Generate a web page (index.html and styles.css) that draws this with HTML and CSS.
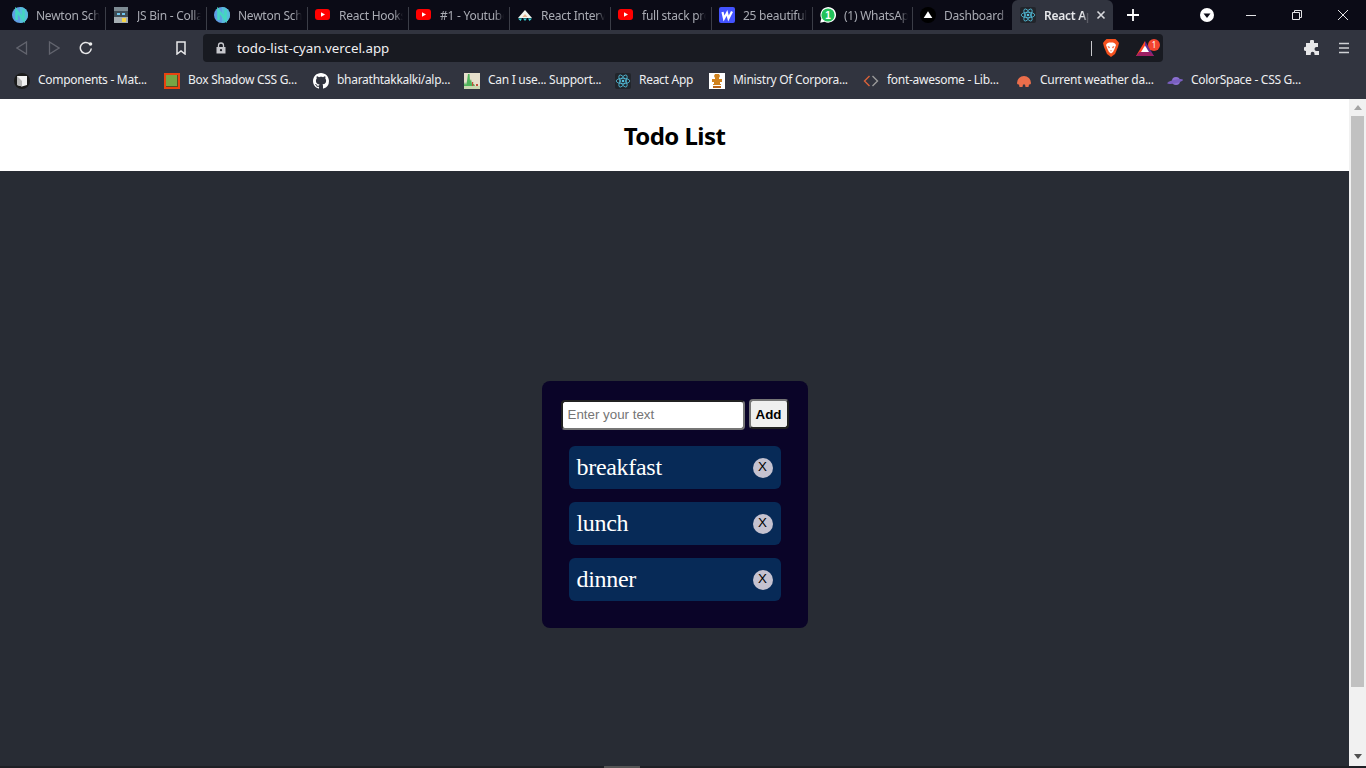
FILE: index.html
```html
<!DOCTYPE html>
<html lang="en">

<head>
    <meta charset="UTF-8">
    <meta name="viewport" content="width=device-width, initial-scale=1.0">
    <title>React App</title>
    <link rel="stylesheet" href="styles.css">
</head>

<body>
    <svg class="defs" aria-hidden="true">
        <symbol id="newton" viewBox="0 0 16 16">
            <circle cx="8" cy="8" r="8" fill="#5f9fe4" />
            <path d="M8 0a8 8 0 0 1 0 16Z" fill="#58bcdc" />
            <path d="M4.500 13V3.500L11.500 12.500V2.500" fill="none" stroke="#45d6c0" stroke-width="2.600" />
        </symbol>
        <symbol id="jsbin" viewBox="0 0 16 16">
            <rect x="1" width="14" height="4" fill="#7d8b93" />
            <rect x="1" y="4" width="14" height="6" fill="#3f4d56" />
            <rect x="1" y="10" width="14" height="6" fill="#a5aeb3" />
            <rect x="4" y="6" width="3" height="2" fill="#6fc6ee" />
            <rect x="9" y="6" width="3" height="2" fill="#6fc6ee" />
            <rect x="9" y="11" width="4" height="4" fill="#f5d547" />
        </symbol>
        <symbol id="youtube" viewBox="0 0 16 16">
            <rect y="2" width="15" height="11" rx="3" fill="#f00" />
            <path d="M6 5.200v4.600L10 7.500Z" fill="#fff" />
        </symbol>
        <symbol id="peak" viewBox="0 0 16 16">
            <path d="M8 3 15 11H1Z" fill="#f2f4ee" />
            <path d="M8 7 10.500 10H5.500Z" fill="#e8b48e" />
            <path d="M1 11.500h4l-1.500 2.500ZM6 11.500h4L8 14ZM11 11.500h4L12.500 14Z" fill="#36d4d8" />
        </symbol>
        <symbol id="webflow" viewBox="0 0 16 16">
            <rect width="16" height="16" rx="2" fill="#4353ff" />
            <path d="M3.500 5 5 11.500 8 6 9.500 11.500 13 4.500" fill="none" stroke="#fff" stroke-width="2.200" />
        </symbol>
        <symbol id="whatsapp" viewBox="0 0 16 16">
            <path d="M.2 15.800 1.300 11.500A7.800 7.800 0 1 1 4.600 14.800Z" fill="#fff" />
            <circle cx="8" cy="8" r="6.600" fill="#22c25a" />
            <text x="8" y="11.500" class="wa-count">1</text>
        </symbol>
        <symbol id="vercel" viewBox="0 0 16 16">
            <circle cx="8" cy="8" r="8" fill="#000" />
            <path d="M8 4.200 12.300 11H3.700Z" fill="#fff" />
        </symbol>
        <symbol id="react" viewBox="0 0 16 16">
            <rect width="16" height="16" rx="2" fill="#22252b" />
            <g fill="none" stroke="#53c1de" stroke-width=".8">
                <ellipse cx="8" cy="8" rx="6.800" ry="2.700" />
                <ellipse cx="8" cy="8" rx="6.800" ry="2.700" transform="rotate(60 8 8)" />
                <ellipse cx="8" cy="8" rx="6.800" ry="2.700" transform="rotate(120 8 8)" />
            </g>
            <circle cx="8" cy="8" r="1.300" fill="#53c1de" />
        </symbol>
        <symbol id="mui" viewBox="0 0 16 16">
            <circle cx="8" cy="8" r="8" fill="#1c1c1c" />
            <path d="M3 3h10V12L8 13.500 3 12Z" fill="#f2f2f2" />
            <path d="M3 3 8 8V13.500L3 12Z" fill="#b8b8b8" />
        </symbol>
        <symbol id="boxshadow" viewBox="0 0 16 16">
            <rect width="16" height="16" fill="#e8430f" />
            <rect x="2" y="2" width="12" height="12" fill="#76a544" />
            <path d="M2 13h12v1H2ZM13 2h1v12h-1Z" fill="#5c4a20" />
        </symbol>
        <symbol id="github" viewBox="0 0 16 16">
            <path fill="#fff" d="M8 0C3.580 0 0 3.580 0 8c0 3.540 2.290 6.530 5.470 7.590.4.070.55-.17.55-.38 0-.19-.01-.82-.01-1.490-2.010.37-2.530-.49-2.690-.94-.09-.23-.48-.94-.82-1.130-.28-.15-.68-.52-.01-.53.63-.01 1.080.58 1.230.82.720 1.210 1.870.870 2.330.660.070-.520.280-.870.510-1.070-1.780-.2-3.640-.890-3.640-3.950 0-.870.310-1.590.820-2.150-.080-.2-.360-1.020.080-2.120 0 0 .670-.210 2.200.820.640-.180 1.320-.270 2-.270s1.360.090 2 .270c1.530-1.040 2.200-.820 2.200-.820.440 1.100.160 1.920.080 2.120.510.560.820 1.270.820 2.150 0 3.070-1.870 3.750-3.650 3.950.290.250.540.730.540 1.480 0 1.070-.010 1.930-.010 2.200 0 .210.150.460.550.380A8.010 8.010 0 0 0 16 8c0-4.420-3.580-8-8-8Z" />
        </symbol>
        <symbol id="caniuse" viewBox="0 0 16 16">
            <rect width="16" height="16" fill="#e6dfcc" />
            <path d="M0 12 1 9 2 12 3 8 4 1 5.500 1 6 8 7 6 8 11 10 11 11 13H0Z" fill="#4fb35a" />
            <path d="M0 13h16v3H0Z" fill="#c9d8b0" />
            <path d="M8 9h1.200v4H8ZM12 11h2v2h-2Z" fill="#c0503a" />
        </symbol>
        <symbol id="emblem" viewBox="0 0 16 16">
            <rect width="16" height="16" fill="#fff" />
            <path d="M6 1h4l1 2-1 2v1h3v3h-2v2h1v1H4v-1h1V9H3V6h3V5L5 3Z" fill="#d0821e" />
            <path d="M4 13h8v2H4Z" fill="#b8651a" />
        </symbol>
        <symbol id="code" viewBox="0 0 16 16">
            <path d="M6.500 3 1.500 8 6.500 13" fill="none" stroke="#d9623a" stroke-width="1.400" />
            <path d="M9.500 3 14.500 8 9.500 13" fill="none" stroke="#9a9a9a" stroke-width="1.400" />
        </symbol>
        <symbol id="weather" viewBox="0 0 16 16">
            <path d="M1 10a7 7 0 0 1 14 0c0 1-1 1.500-2 1.500l-.5 2.500h-3l-.5-2.500H7l-.5 2.500h-3L3 11.500c-1 0-2-.5-2-1.500Z" fill="#eb6e4b" />
        </symbol>
        <symbol id="planet" viewBox="0 0 16 16">
            <circle cx="9" cy="8" r="4" fill="#8b6fd0" />
            <ellipse cx="8" cy="8.500" rx="8" ry="1.800" transform="rotate(-12 8 8)" fill="#7a5fc0" />
        </symbol>
    </svg>

    <div class="tabstrip">
        <div class="tab"><svg class="favicon"><use href="#newton" /></svg><span class="tab-title">Newton Sch</span></div>
        <div class="tab"><svg class="favicon"><use href="#jsbin" /></svg><span class="tab-title">JS Bin - Colla</span></div>
        <div class="tab"><svg class="favicon"><use href="#newton" /></svg><span class="tab-title">Newton Sch</span></div>
        <div class="tab"><svg class="favicon"><use href="#youtube" /></svg><span class="tab-title">React Hooks</span></div>
        <div class="tab"><svg class="favicon"><use href="#youtube" /></svg><span class="tab-title">#1 - Youtube</span></div>
        <div class="tab"><svg class="favicon"><use href="#peak" /></svg><span class="tab-title">React Intervi</span></div>
        <div class="tab"><svg class="favicon"><use href="#youtube" /></svg><span class="tab-title">full stack pro</span></div>
        <div class="tab"><svg class="favicon"><use href="#webflow" /></svg><span class="tab-title">25 beautiful</span></div>
        <div class="tab tab-narrow"><svg class="favicon"><use href="#whatsapp" /></svg><span class="tab-title">(1) WhatsAp</span></div>
        <div class="tab tab-last"><svg class="favicon"><use href="#vercel" /></svg><span class="tab-title">Dashboard -</span></div>
        <div class="tab tab-active">
            <svg class="favicon"><use href="#react" /></svg>
            <span class="tab-title">React Ap</span>
            <svg class="tab-close" viewBox="0 0 10 10"><path d="M1.500 1.500 8.500 8.500M8.500 1.500 1.500 8.500" /></svg>
        </div>
        <svg class="new-tab" viewBox="0 0 12 12"><path d="M6 0V12M0 6H12" /></svg>
        <svg class="tab-search" viewBox="0 0 14 14"><circle cx="7" cy="7" r="7" fill="#fff" /><path d="M3.500 5.500h7L7 10Z" fill="#0b0b16" /></svg>
        <div class="window-controls">
            <svg viewBox="0 0 10 10"><path d="M0 5.500H10" /></svg>
            <svg viewBox="0 0 10 10"><path d="M.5 2.500h7v7h-7ZM2.500 2.500v-2h7v7h-2" /></svg>
            <svg viewBox="0 0 10 10"><path d="M0 0 10 10M10 0 0 10" /></svg>
        </div>
    </div>

    <div class="toolbar">
        <button class="tool-btn">
            <svg class="nav-off" viewBox="0 0 12 14"><path d="M10.500 1V13L1 7Z" /></svg>
        </button>
        <button class="tool-btn">
            <svg class="nav-off" viewBox="0 0 12 14"><path d="M1.500 1V13L11 7Z" /></svg>
        </button>
        <button class="tool-btn">
            <svg class="nav-on" viewBox="0 0 14 14"><path d="M12.300 7.500A5.500 5.500 0 1 1 10.500 2.800" /><circle cx="11.500" cy="3" r="1.800" fill="#eee" stroke="none" /></svg>
        </button>
        <button class="tool-btn bookmark-btn">
            <svg class="nav-on" viewBox="0 0 12 14"><path d="M2 1h8v12L6 10 2 13Z" /></svg>
        </button>
        <div class="address">
            <svg class="lock" viewBox="0 0 10 12"><path d="M2.500 5V3.500a2.500 2.500 0 0 1 5 0V5" fill="none" stroke="#c6c7cc" stroke-width="1.300" /><path d="M.5 5h9v6.500h-9Z" fill="#c6c7cc" /><circle cx="5" cy="8.200" r="1.100" fill="#181a21" /></svg>
            <span class="url">todo-list-cyan.vercel.app</span>
            <span class="address-sep"></span>
            <svg class="brave" viewBox="0 0 16 18">
                <path d="M3.500 0h9L14.500 2 16 4 15 8 12 15 8 18 4 15 1 8 0 4 1.500 2Z" fill="#f4511e" />
                <path d="M4 4.500 6 3.500H10L12 4.500 13 6 11.500 10 10 13 8 14.500 6 13 4.500 10 3 6Z" fill="#fff" />
                <path d="M4.500 7 7 8 6 9.500ZM11.500 7 9 8 10 9.500ZM7 11.500H9L8 12.500Z" fill="#f4511e" />
            </svg>
            <div class="rewards">
                <svg viewBox="0 0 18 15">
                    <path d="M9 0 18 15H12.500L9 5Z" fill="#662d91" />
                    <path d="M9 0 0 15H5.500L9 5Z" fill="#ff4724" />
                    <path d="M9 4.500 13 11H5Z" fill="#fff" />
                    <path d="M0 15 3.500 11H14.500L18 15Z" fill="#9e1f63" />
                </svg>
                <span class="badge">1</span>
            </div>
        </div>
        <button class="tool-btn puzzle-btn">
            <svg class="solid" viewBox="0 0 16 16"><path d="M6 1.500a2 2 0 0 1 4 0V3h4v4h-1.500a2 2 0 0 0 0 4H15v4h-4.500v-1.300a1.900 1.900 0 0 0-3.800 0V15H2v-4h-.2a2.100 2.100 0 0 1 0-4.200H2V3h4Z" /></svg>
        </button>
        <button class="tool-btn">
            <svg class="menu" viewBox="0 0 12 12"><path d="M1 1.500H11M1 6H11M1 10.500H11" /></svg>
        </button>
    </div>

    <div class="bookmarks">
        <div class="bookmark"><svg class="favicon"><use href="#mui" /></svg><span>Components - Mat...</span></div>
        <div class="bookmark"><svg class="favicon"><use href="#boxshadow" /></svg><span>Box Shadow CSS G...</span></div>
        <div class="bookmark"><svg class="favicon"><use href="#github" /></svg><span>bharathtakkalki/alp...</span></div>
        <div class="bookmark"><svg class="favicon"><use href="#caniuse" /></svg><span>Can I use... Support...</span></div>
        <div class="bookmark"><svg class="favicon"><use href="#react" /></svg><span>React App</span></div>
        <div class="bookmark"><svg class="favicon"><use href="#emblem" /></svg><span>Ministry Of Corpora...</span></div>
        <div class="bookmark"><svg class="favicon"><use href="#code" /></svg><span>font-awesome - Lib...</span></div>
        <div class="bookmark"><svg class="favicon"><use href="#weather" /></svg><span>Current weather da...</span></div>
        <div class="bookmark"><svg class="favicon"><use href="#planet" /></svg><span>ColorSpace - CSS G...</span></div>
    </div>

    <div class="viewport">
        <div class="page">
            <header class="app-header">
                <h1>Todo List</h1>
            </header>
            <main class="app-main">
                <div class="todo-card">
                    <form class="todo-form">
                        <input type="text" class="todo-input" placeholder="Enter your text">
                        <button type="button" class="add-btn">Add</button>
                    </form>
                    <ul class="todo-list">
                        <li class="todo-item"><span>breakfast</span><button class="remove-btn">X</button></li>
                        <li class="todo-item"><span>lunch</span><button class="remove-btn">X</button></li>
                        <li class="todo-item"><span>dinner</span><button class="remove-btn">X</button></li>
                    </ul>
                </div>
            </main>
        </div>
        <div class="scrollbar">
            <svg class="arrow" viewBox="0 0 8 5"><path d="M4 0 8 5H0Z" /></svg>
            <div class="thumb"></div>
            <svg class="arrow arrow-down" viewBox="0 0 8 5"><path d="M0 0H8L4 5Z" /></svg>
        </div>
    </div>

    <div class="taskbar-edge"><span class="taskbar-mark"></span></div>
</body>

</html>
```

FILE: styles.css
```css
* {
    box-sizing: border-box;
}

html,
body {
    margin: 0;
    padding: 0;
    height: 768px;
    overflow: hidden;
}

body {
    font-family: "Noto Sans", "Open Sans", sans-serif;
    background-color: #282c34;
    display: flex;
    flex-direction: column;
}

.defs {
    display: none;
}

.favicon {
    width: 16px;
    height: 16px;
    flex: none;
}

.wa-count {
    font-family: "Liberation Sans", Arial, sans-serif;
    font-size: 10px;
    font-weight: 700;
    fill: #fff;
    text-anchor: middle;
}

/* tab strip */
.tabstrip {
    height: 30px;
    flex: none;
    background-color: #0b0b16;
    display: flex;
    align-items: stretch;
    padding-left: 5px;
}

.tab {
    width: 101px;
    flex: none;
    display: flex;
    align-items: center;
    gap: 8px;
    padding-left: 7px;
    position: relative;
    font-size: 12px;
    letter-spacing: -0.25px;
    color: #a9abb3;
}

.tab::after {
    content: "";
    position: absolute;
    right: 0;
    top: 7px;
    height: 23px;
    width: 1px;
    background-color: #3b3d47;
}

.tab-narrow {
    width: 100px;
}

.tab-last {
    width: 99px;
}

.tab-last::after,
.tab-active::after {
    display: none;
}

.tab-title {
    width: 64px;
    white-space: nowrap;
    overflow: hidden;
    -webkit-mask-image: linear-gradient(to right, #000 86%, transparent);
    mask-image: linear-gradient(to right, #000 86%, transparent);
}

.tab-active {
    background-color: #31343f;
    border-radius: 6px 6px 0 0;
    padding-left: 8px;
    color: #e6e7ea;
    font-weight: 600;
}

.tab-active .tab-title {
    width: 45px;
}

.tab-close {
    width: 10px;
    height: 10px;
    margin-left: -1px;
    fill: none;
    stroke: #d8d9dd;
    stroke-width: 1.6;
}

.new-tab {
    width: 12px;
    height: 12px;
    margin: 9px 0 0 14px;
    fill: none;
    stroke: #fff;
    stroke-width: 1.8;
}

.tab-search {
    width: 14px;
    height: 14px;
    margin: 8px 0 0 61px;
}

.window-controls {
    display: flex;
    margin-left: auto;
    align-items: center;
    gap: 36px;
    padding-right: 18px;
}

.window-controls svg {
    width: 10px;
    height: 10px;
    fill: none;
    stroke: #e4e4e6;
    stroke-width: 1;
}

/* toolbar */
.toolbar {
    height: 32px;
    flex: none;
    background-color: #31343f;
    display: flex;
    align-items: flex-end;
    padding-left: 6px;
}

.tool-btn {
    width: 32px;
    height: 28px;
    flex: none;
    padding: 0;
    border: none;
    background: none;
    display: flex;
    align-items: center;
    justify-content: center;
}

.nav-off {
    width: 12px;
    height: 14px;
    fill: none;
    stroke: #62646e;
    stroke-width: 1.3;
}

.nav-on {
    width: 14px;
    height: 14px;
    fill: none;
    stroke: #e8e8ea;
    stroke-width: 1.5;
}

.bookmark-btn {
    margin-left: 63px;
}

.address {
    width: 960px;
    height: 28px;
    margin-left: 6px;
    flex: none;
    background-color: #181a21;
    border-radius: 4px;
    display: flex;
    align-items: center;
    padding-left: 13px;
}

.lock {
    width: 10px;
    height: 12px;
    flex: none;
}

.url {
    margin-left: 11px;
    width: 854px;
    font-size: 13.3px;
    color: #f0f0f2;
}

.address-sep {
    width: 1px;
    height: 15px;
    flex: none;
    background-color: #c8c8cc;
}

.brave {
    width: 16px;
    height: 18px;
    margin-left: 11px;
    flex: none;
}

.rewards {
    position: relative;
    width: 18px;
    height: 15px;
    margin-left: 17px;
    flex: none;
    display: flex;
}

.badge {
    position: absolute;
    top: -2px;
    right: -6px;
    width: 12px;
    height: 12px;
    border-radius: 50%;
    background-color: #f4452f;
    color: #fff;
    font-size: 8px;
    line-height: 12px;
    text-align: center;
}

.puzzle-btn {
    margin-left: 133px;
}

.solid {
    width: 16px;
    height: 16px;
    fill: #e6e6e8;
}

.menu {
    width: 12px;
    height: 12px;
    fill: none;
    stroke: #d0d1d5;
    stroke-width: 1.6;
}

/* bookmarks */
.bookmarks {
    height: 37px;
    flex: none;
    background-color: #31343f;
    padding-left: 14px;
    display: grid;
    grid-template-columns: 150px 149px 151px 151px 94px 154px 153px 151px auto;
    align-items: center;
}

.bookmark {
    display: flex;
    align-items: center;
    gap: 8px;
    font-size: 12px;
    letter-spacing: -0.28px;
    color: #eeeff1;
    white-space: nowrap;
}

.bookmark span {
    margin-bottom: 2px;
}

/* page */
.viewport {
    flex: 1;
    min-height: 0;
    display: flex;
}

.page {
    flex: 1;
    overflow: hidden;
}

.app-header {
    height: 72px;
    background-color: #fff;
    display: flex;
    align-items: center;
    justify-content: center;
}

.app-header h1 {
    margin: 0;
    font-size: 24px;
    font-weight: 700;
    letter-spacing: -0.55px;
    color: #000;
}

.app-main {
    height: 667px;
    background-color: #282c34;
    display: flex;
    align-items: center;
    justify-content: center;
}

.todo-card {
    width: 266px;
    height: 247px;
    background-color: #0a0428;
    border-radius: 8px;
    padding: 18px 19px 0;
}

.todo-form {
    display: flex;
    align-items: flex-start;
    gap: 4px;
}

.todo-input {
    width: 184px;
    height: 30px;
    margin-top: 1px;
    padding: 0 5px 2px;
    border: 2px inset #767676;
    border-radius: 4px;
    background-color: #fff;
    font-family: "Liberation Sans", Arial, sans-serif;
    font-size: 13.33px;
}

.add-btn {
    width: 41px;
    height: 30px;
    padding: 0;
    border: 2px outset #767676;
    border-radius: 4px;
    background-color: #efefef;
    font-family: "Liberation Sans", Arial, sans-serif;
    font-size: 13.33px;
    font-weight: 700;
    color: #000;
}

.todo-list {
    list-style: none;
    margin: 16px 8px 0;
    padding: 0;
    display: flex;
    flex-direction: column;
    gap: 13px;
}

.todo-item {
    height: 43px;
    background-color: #072a57;
    border-radius: 6px;
    display: flex;
    align-items: center;
    justify-content: space-between;
    padding: 0 8px;
    font-family: "Liberation Serif", "Times New Roman", serif;
    font-size: 24px;
    letter-spacing: -0.3px;
    color: #fff;
}

.remove-btn {
    width: 20px;
    height: 20px;
    padding: 0 0 2px;
    border: none;
    border-radius: 50%;
    background-color: #c5c2d0;
    font-family: "Liberation Sans", Arial, sans-serif;
    font-size: 13.33px;
    color: #000;
}

/* scrollbar */
.scrollbar {
    width: 17px;
    flex: none;
    background-color: #f1f1f1;
    display: flex;
    flex-direction: column;
    align-items: center;
    padding-top: 6px;
}

.arrow {
    width: 8px;
    height: 5px;
    flex: none;
    fill: #a3a3a3;
}

.arrow-down {
    margin-top: 67px;
    fill: #505050;
}

.thumb {
    width: 13px;
    height: 571px;
    margin-top: 6px;
    flex: none;
    background-color: #c1c1c1;
}

.taskbar-edge {
    height: 2px;
    flex: none;
    background-color: #1e2025;
    padding-left: 604px;
}

.taskbar-mark {
    display: block;
    width: 36px;
    height: 2px;
    background-color: #555;
}
```
